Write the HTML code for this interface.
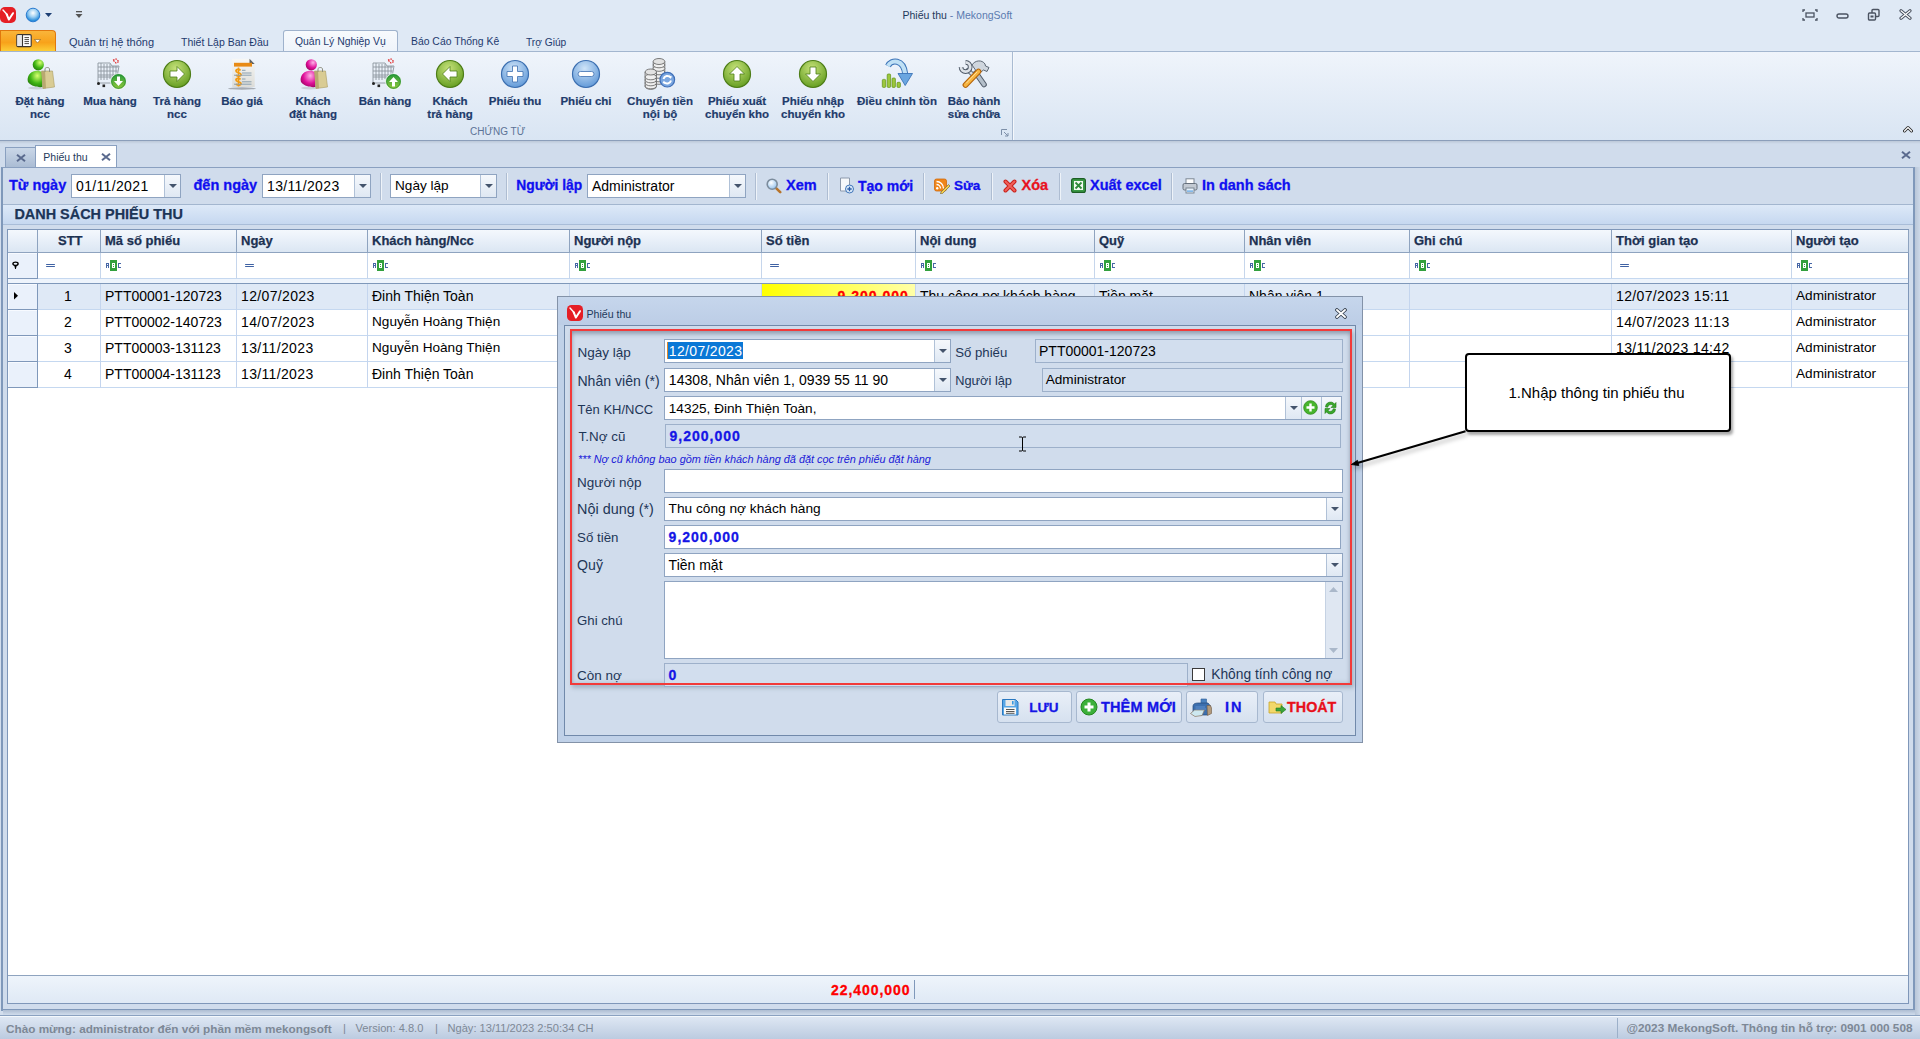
<!DOCTYPE html><html><head><meta charset="utf-8"><style>
*{box-sizing:border-box;margin:0;padding:0}
html,body{width:1920px;height:1039px;overflow:hidden;background:#d3deed;font-family:"Liberation Sans",sans-serif;position:relative}
.a{position:absolute}
.t{position:absolute;white-space:nowrap;line-height:1}
.rl{position:absolute;white-space:nowrap;text-align:center;font-weight:bold;font-size:11.5px;color:#1f3c6c;line-height:13px;width:120px;-webkit-text-stroke:0.2px currentColor}
.ic{position:absolute}
.inp{position:absolute;background:#fff;border:1px solid #8fa4c1}
.dis{position:absolute;background:#d2deee;border:1px solid #9db0ca}
.dd{position:absolute;top:0;bottom:0;right:0;width:16px;border-left:1px solid #b0c1d7;background:linear-gradient(#f5f8fc,#dfe8f3)}
.dd:after{content:"";position:absolute;left:4px;top:50%;margin-top:-2px;border-left:4px solid transparent;border-right:4px solid transparent;border-top:4px solid #44546c}
.tbl{position:absolute;font-weight:bold;color:#1010f0;font-size:14.5px;white-space:nowrap;line-height:1;-webkit-text-stroke:0.3px currentColor}
.vsep{position:absolute;width:2px;border-left:1px solid #aebdd2;border-right:1px solid #eef3f9}
.hc{position:absolute;top:0;height:23px;border-right:1px solid #8ea3bf;font-weight:bold;font-size:12.5px;color:#1c3152;white-space:nowrap;line-height:1;padding:7px 0 0 5px}
.fc{position:absolute;top:23px;height:26px;border-right:1px solid #c3d3ea}
.cell{position:absolute;height:26px;border-right:1px solid #c4d5ee;border-bottom:1px solid #c4d5ee;font-size:13px;color:#000;white-space:nowrap;overflow:hidden;line-height:1;padding:7px 0 0 5px}
.dl{position:absolute;font-size:13px;color:#1e3657;white-space:nowrap;line-height:1}
.dv{position:absolute;font-size:13px;color:#000;white-space:nowrap;line-height:1}
.sb{position:absolute;font-size:11.5px;color:#7d8896;white-space:nowrap;line-height:1}
</style></head><body>
<div class="a" style="left:0;top:0;width:1920px;height:52px;background:#dfe9f5"></div>
<svg class="a" style="left:0;top:7px" width="17" height="17" viewBox="0 0 17 17"><rect x="0" y="0" width="16" height="16" rx="5" fill="#e51e25"/><path d="M3 3L7.3 7.8" stroke="#fff" stroke-width="1.4" fill="none" stroke-linecap="round"/><path d="M6.6 7.2L8.9 12.5L13 6.2" stroke="#fff" stroke-width="2" fill="none" stroke-linecap="round" stroke-linejoin="round"/></svg>
<svg class="a" style="left:25px;top:7px" width="16" height="16" viewBox="0 0 16 16"><defs><radialGradient id="gl" cx="0.5" cy="0.35" r="0.6"><stop offset="0" stop-color="#ffffff"/><stop offset="0.5" stop-color="#9fd0f2"/><stop offset="1" stop-color="#1c86d8"/></radialGradient></defs><circle cx="8" cy="8" r="6.8" fill="url(#gl)" stroke="#2a7bd0" stroke-width="1"/></svg>
<svg class="a" style="left:45px;top:13px" width="8" height="5"><path d="M0 0H7L3.5 4Z" fill="#1d3f74"/></svg>
<svg class="a" style="left:75px;top:11px" width="8" height="8"><rect x="1" y="0" width="6" height="1.3" fill="#555"/><path d="M0.5 3H7.5L4 7Z" fill="#555"/></svg>
<div class="t" style="left:902.50px;top:9.61px;font-size:10.50px;color:#1e395b">Phiếu thu <span style="color:#5b7bb0">- MekongSoft</span></div>
<svg class="a" style="left:1802px;top:9px" width="16" height="12" viewBox="0 0 16 12"><path d="M1 3V1H3 M13 1H15V3 M15 9V11H13 M3 11H1V9" stroke="#4b5361" stroke-width="1.3" fill="none"/><rect x="4" y="4" width="8" height="4" stroke="#4b5361" stroke-width="1.3" fill="none"/></svg>
<svg class="a" style="left:1836px;top:12px" width="14" height="8"><rect x="1" y="2" width="11" height="4" rx="2" stroke="#4b5361" stroke-width="1.4" fill="none"/></svg>
<svg class="a" style="left:1867px;top:8px" width="14" height="14" viewBox="0 0 14 14"><rect x="5" y="1.5" width="7" height="7" rx="1" stroke="#4b5361" stroke-width="1.4" fill="#dfe9f5"/><rect x="1.5" y="5" width="7" height="7" rx="1" stroke="#4b5361" stroke-width="1.4" fill="#dfe9f5"/><rect x="3.5" y="7.5" width="3" height="2" fill="#4b5361"/></svg>
<svg class="a" style="left:1899px;top:9px" width="13" height="11" viewBox="0 0 13 11"><path d="M2 1.8L11 9.2M11 1.8L2 9.2" stroke="#4b5361" stroke-width="3.2" stroke-linecap="round"/><path d="M2 1.8L11 9.2M11 1.8L2 9.2" stroke="#fff" stroke-width="1.2" stroke-linecap="round"/></svg>
<div class="a" style="left:0;top:30px;width:56px;height:22px;border-radius:0 4px 0 0;background:linear-gradient(#f9b53b,#f8a21a 55%,#fcd23a);border:1px solid #e0780d;border-bottom:none"></div>
<svg class="a" style="left:16px;top:34px" width="27" height="14" viewBox="0 0 27 14"><rect x="0.8" y="0.6" width="14.4" height="12" rx="1.2" fill="#fff" stroke="#3a3530" stroke-width="1.1"/><rect x="1.4" y="1.2" width="4.6" height="10.8" fill="#e6e6e6"/><line x1="6.5" y1="1" x2="6.5" y2="12.5" stroke="#3a3530" stroke-width="1.1"/><path d="M8.5 3.6H13M8.5 5.6H13M8.5 7.6H13M8.5 9.6H13" stroke="#3a3530" stroke-width="0.9"/><path d="M18.5 5.5H24.5L21.5 9Z" fill="#fff" stroke="#6a4a10" stroke-width="0.5"/></svg>
<div class="a" style="left:283px;top:30px;width:115px;height:23px;border:1px solid #9fb2cc;border-bottom:none;border-radius:3px 3px 0 0;background:linear-gradient(#f7fafd,#eef3fa)"></div>
<div class="t" style="left:69.00px;top:36.88px;font-size:11.00px;color:#1e3a6e">Quản trị hệ thống</div>
<div class="t" style="left:181.00px;top:37.31px;font-size:10.50px;color:#1e3a6e">Thiết Lập Ban Đầu</div>
<div class="t" style="left:295.00px;top:37.39px;font-size:10.40px;color:#1e3a6e">Quản Lý Nghiệp Vụ</div>
<div class="t" style="left:411.00px;top:37.39px;font-size:10.40px;color:#1e3a6e">Báo Cáo Thống Kê</div>
<div class="t" style="left:526.00px;top:37.56px;font-size:10.20px;color:#1e3a6e">Trợ Giúp</div>
<div class="a" style="left:0;top:51px;width:1920px;height:90px;background:linear-gradient(#eff4fb,#d9e5f3);border-top:1px solid #a3b6cf;border-bottom:1px solid #8b9eba"></div>
<div class="a" style="left:1012px;top:52px;width:1px;height:88px;background:#a9bbd2"></div>
<div class="a" style="left:1013px;top:52px;width:1px;height:88px;background:#f5f8fc"></div>
<div class="t" style="left:470px;top:127px;font-size:10px;color:#5b7296">CHỨNG TỪ</div>
<svg class="a" style="left:1001px;top:129px" width="8" height="8"><path d="M0.5 6V0.5H6" stroke="#7d8fa8" fill="none"/><path d="M3 3L7 7M7 4V7H4" stroke="#7d8fa8" fill="none"/></svg>
<svg class="a" style="left:1902.5px;top:125px" width="10" height="8" viewBox="0 0 10 8"><path d="M1.5 6L5 2.5L8.5 6" stroke="#2a2a2a" stroke-width="3" fill="none" stroke-linecap="round" stroke-linejoin="round"/><path d="M1.5 6L5 2.5L8.5 6" stroke="#fff" stroke-width="1.2" fill="none" stroke-linecap="round" stroke-linejoin="round"/></svg>
<div class="ic" style="left:24px;top:58px;width:32px;height:32px"><svg width="32" height="32" viewBox="0 0 32 32"><defs><radialGradient id="p1" cx="0.65" cy="0.3" r="0.85"><stop offset="0" stop-color="#d6ff70"/><stop offset="0.55" stop-color="#3fb514"/><stop offset="1" stop-color="#1f6a08"/></radialGradient></defs><ellipse cx="13" cy="30" rx="9" ry="1.5" fill="rgba(0,0,0,0.12)"/><circle cx="14.3" cy="6.8" r="5.6" fill="url(#p1)"/><path d="M4 24C2.5 19 6 13.5 11 13C14 12.5 17 13 18.5 15V29C15 29.5 8 29 4 24Z" fill="url(#p1)"/><path d="M17.5 13H28.5L30.5 29L19 30.5Z" fill="#d9cc94" stroke="#aa9a60" stroke-width="0.6"/><path d="M17.5 13H21L22 30.3L19 30.5Z" fill="#b8a870"/><path d="M21 14V11C21 9 25.5 9 25.5 11V14" stroke="#8f8f80" stroke-width="1" fill="none"/></svg></div>
<div class="rl" style="left:-20px;top:95px">Đặt hàng<br>ncc</div>
<div class="ic" style="left:94px;top:58px;width:32px;height:32px"><svg width="32" height="32" viewBox="0 0 32 32"><g stroke="#8c959e" stroke-width="0.9" fill="none"><path d="M4 5V25M7 5V22M10 6V22M13 6V22M16 6V21M19 8V20M22 8V19"/><path d="M4 5H16L18 8H25L23 19H4M4 9H24M4 13H23.5M4 17H23"/><path d="M5 25H18"/></g><path d="M19 2L22 1L25 3.5L22 5Z" stroke="#e03030" stroke-width="1.2" fill="none" stroke-dasharray="1.5 1"/><circle cx="4.5" cy="25.5" r="1.5" fill="#222"/><rect x="8.5" y="26.5" width="2.6" height="2.6" fill="#222"/><defs><linearGradient id="cg2" x1="0" y1="0" x2="0" y2="1"><stop offset="0" stop-color="#239a3a"/><stop offset="1" stop-color="#95c83a"/></linearGradient></defs><circle cx="24.5" cy="23.5" r="7.8" fill="url(#cg2)" stroke="#fff" stroke-width="0.8"/><circle cx="24.5" cy="23.5" r="6.9" fill="none" stroke="#1f8a30" stroke-width="0.7"/><path d="M23 18.5V23H20L24.5 28L29 23H26V18.5Z" fill="#fff"/></svg></div>
<div class="rl" style="left:50px;top:95px">Mua hàng</div>
<div class="ic" style="left:161px;top:58px;width:32px;height:32px"><svg width="32" height="32" viewBox="0 0 32 32"><defs><radialGradient id="g3" cx="0.45" cy="0.3" r="0.75"><stop offset="0" stop-color="#c6e27a"/><stop offset="1" stop-color="#5f9a1c"/></radialGradient></defs><circle cx="16" cy="16" r="13.5" fill="url(#g3)" stroke="#4d7d17" stroke-width="1.2"/><path d="M9 13H16V8.5L23.5 16L16 23.5V19H9Z" fill="#fff" stroke="#4d7d17" stroke-width="0.8"/></svg></div>
<div class="rl" style="left:117px;top:95px">Trả hàng<br>ncc</div>
<div class="ic" style="left:226px;top:58px;width:32px;height:32px"><svg width="32" height="32" viewBox="0 0 32 32"><defs><linearGradient id="d%4" x1="0" y1="0" x2="0" y2="1"><stop offset="0" stop-color="#f7f7f5"/><stop offset="1" stop-color="#dcdcd8"/></linearGradient></defs><ellipse cx="16" cy="30.5" rx="14" ry="1.2" fill="rgba(0,0,0,0.28)"/><path d="M6.2 0.8H23.5L28.7 6V29H6.2Z" fill="url(#d%4)"/><path d="M23.5 0.8L28.7 6H23.5Z" fill="#5e6266"/><rect x="8" y="4.8" width="18" height="3.8" fill="#e88a14"/><path d="M12.5 9.5V20M12.5 19V28.5" stroke="#f39a10" stroke-width="1.6"/><path d="M14.5 12.5C13.5 11 10 11 10 13C10 15 15 14.5 15 16.5C15 18.5 11 18.5 10 17M14.5 21.5C13.5 20 10 20 10 22C10 24 15 23.5 15 25.5C15 27.5 11 27.5 10 26" stroke="#f39a10" stroke-width="1.8" fill="none"/><path d="M16 12.3H19.5M16 15H25.5M16 21H19.5M16 23.8H25.5M8 17.2H25.5M8 26.2H25.5" stroke="#8aa0b0" stroke-width="1"/></svg></div>
<div class="rl" style="left:182px;top:95px">Báo giá</div>
<div class="ic" style="left:297px;top:58px;width:32px;height:32px"><svg width="32" height="32" viewBox="0 0 32 32"><defs><radialGradient id="p5" cx="0.65" cy="0.3" r="0.85"><stop offset="0" stop-color="#ffb0e8"/><stop offset="0.55" stop-color="#e0109a"/><stop offset="1" stop-color="#8a0050"/></radialGradient></defs><ellipse cx="13" cy="30" rx="9" ry="1.5" fill="rgba(0,0,0,0.12)"/><circle cx="14.3" cy="6.8" r="5.6" fill="url(#p5)"/><path d="M4 24C2.5 19 6 13.5 11 13C14 12.5 17 13 18.5 15V29C15 29.5 8 29 4 24Z" fill="url(#p5)"/><path d="M17.5 13H28.5L30.5 29L19 30.5Z" fill="#d9cc94" stroke="#aa9a60" stroke-width="0.6"/><path d="M17.5 13H21L22 30.3L19 30.5Z" fill="#b8a870"/><path d="M21 14V11C21 9 25.5 9 25.5 11V14" stroke="#8f8f80" stroke-width="1" fill="none"/></svg></div>
<div class="rl" style="left:253px;top:95px">Khách<br>đặt hàng</div>
<div class="ic" style="left:369px;top:58px;width:32px;height:32px"><svg width="32" height="32" viewBox="0 0 32 32"><g stroke="#8c959e" stroke-width="0.9" fill="none"><path d="M4 5V25M7 5V22M10 6V22M13 6V22M16 6V21M19 8V20M22 8V19"/><path d="M4 5H16L18 8H25L23 19H4M4 9H24M4 13H23.5M4 17H23"/><path d="M5 25H18"/></g><path d="M19 2L22 1L25 3.5L22 5Z" stroke="#e03030" stroke-width="1.2" fill="none" stroke-dasharray="1.5 1"/><circle cx="4.5" cy="25.5" r="1.5" fill="#222"/><rect x="8.5" y="26.5" width="2.6" height="2.6" fill="#222"/><defs><linearGradient id="cg6" x1="0" y1="0" x2="0" y2="1"><stop offset="0" stop-color="#239a3a"/><stop offset="1" stop-color="#95c83a"/></linearGradient></defs><circle cx="24.5" cy="23.5" r="7.8" fill="url(#cg6)" stroke="#fff" stroke-width="0.8"/><circle cx="24.5" cy="23.5" r="6.9" fill="none" stroke="#1f8a30" stroke-width="0.7"/><path d="M23 28.5V24H20L24.5 19L29 24H26V28.5Z" fill="#fff"/></svg></div>
<div class="rl" style="left:325px;top:95px">Bán hàng</div>
<div class="ic" style="left:434px;top:58px;width:32px;height:32px"><svg width="32" height="32" viewBox="0 0 32 32"><defs><radialGradient id="g7" cx="0.45" cy="0.3" r="0.75"><stop offset="0" stop-color="#c6e27a"/><stop offset="1" stop-color="#5f9a1c"/></radialGradient></defs><circle cx="16" cy="16" r="13.5" fill="url(#g7)" stroke="#4d7d17" stroke-width="1.2"/><path d="M23 13H16V8.5L8.5 16L16 23.5V19H23Z" fill="#fff" stroke="#4d7d17" stroke-width="0.8"/></svg></div>
<div class="rl" style="left:390px;top:95px">Khách<br>trả hàng</div>
<div class="ic" style="left:499px;top:58px;width:32px;height:32px"><svg width="32" height="32" viewBox="0 0 32 32"><defs><radialGradient id="g8" cx="0.45" cy="0.3" r="0.75"><stop offset="0" stop-color="#cfe4f8"/><stop offset="1" stop-color="#5b95d6"/></radialGradient></defs><circle cx="16" cy="16" r="13.5" fill="url(#g8)" stroke="#3c6fb0" stroke-width="1.2"/><path d="M13.5 8H18.5V13.5H24V18.5H18.5V24H13.5V18.5H8V13.5H13.5Z" fill="#fff" stroke="#3c6fb0" stroke-width="0.8"/></svg></div>
<div class="rl" style="left:455px;top:95px">Phiếu thu</div>
<div class="ic" style="left:570px;top:58px;width:32px;height:32px"><svg width="32" height="32" viewBox="0 0 32 32"><defs><radialGradient id="g9" cx="0.45" cy="0.3" r="0.75"><stop offset="0" stop-color="#cfe4f8"/><stop offset="1" stop-color="#5b95d6"/></radialGradient></defs><circle cx="16" cy="16" r="13.5" fill="url(#g9)" stroke="#3c6fb0" stroke-width="1.2"/><rect x="8" y="13.5" width="16" height="5" rx="2.5" fill="#fff" stroke="#3c6fb0" stroke-width="0.8"/></svg></div>
<div class="rl" style="left:526px;top:95px">Phiếu chi</div>
<div class="ic" style="left:644px;top:58px;width:32px;height:32px"><svg width="32" height="32" viewBox="0 0 32 32"><g fill="#efefef" stroke="#6d6d6d" stroke-width="0.9"><path d="M9.2 3.5V23.5A5.8 2.8 0 0 0 20.8 23.5V3.5Z"/><ellipse cx="15" cy="21" rx="5.8" ry="2.8"/><ellipse cx="15" cy="17.5" rx="5.8" ry="2.8"/><ellipse cx="15" cy="14" rx="5.8" ry="2.8"/><ellipse cx="15" cy="10.5" rx="5.8" ry="2.8"/><ellipse cx="15" cy="7" rx="5.8" ry="2.8"/><ellipse cx="15" cy="3.5" rx="5.8" ry="3" fill="#e2e2e2"/><path d="M1.1 14V28.5A5.7 2.8 0 0 0 12.5 28.5V14Z"/><ellipse cx="6.8" cy="28" rx="5.7" ry="2.8"/><ellipse cx="6.8" cy="25" rx="5.7" ry="2.8"/><ellipse cx="6.8" cy="22" rx="5.7" ry="2.8"/><ellipse cx="6.8" cy="19" rx="5.7" ry="2.8"/><ellipse cx="6.8" cy="14" rx="5.7" ry="3" fill="#e2e2e2"/></g><circle cx="23.3" cy="21.7" r="7.3" fill="#7aa6e0" stroke="#3f6fb8" stroke-width="1.2"/><path d="M19.5 21A4 4 0 0 1 26.5 19.5M27 22.5A4 4 0 0 1 20 24" stroke="#fff" stroke-width="2" fill="none"/><path d="M25 17.5L28 18.5L26.5 21Z M21.5 26L18.5 25L20 22.5Z" fill="#fff"/></svg></div>
<div class="rl" style="left:600px;top:95px">Chuyển tiền<br>nội bộ</div>
<div class="ic" style="left:721px;top:58px;width:32px;height:32px"><svg width="32" height="32" viewBox="0 0 32 32"><defs><radialGradient id="g11" cx="0.45" cy="0.3" r="0.75"><stop offset="0" stop-color="#c6e27a"/><stop offset="1" stop-color="#5f9a1c"/></radialGradient></defs><circle cx="16" cy="16" r="13.5" fill="url(#g11)" stroke="#4d7d17" stroke-width="1.2"/><path d="M13 23V16H8.5L16 8.5L23.5 16H19V23Z" fill="#fff" stroke="#4d7d17" stroke-width="0.8"/></svg></div>
<div class="rl" style="left:677px;top:95px">Phiếu xuất<br>chuyển kho</div>
<div class="ic" style="left:797px;top:58px;width:32px;height:32px"><svg width="32" height="32" viewBox="0 0 32 32"><defs><radialGradient id="g12" cx="0.45" cy="0.3" r="0.75"><stop offset="0" stop-color="#c6e27a"/><stop offset="1" stop-color="#5f9a1c"/></radialGradient></defs><circle cx="16" cy="16" r="13.5" fill="url(#g12)" stroke="#4d7d17" stroke-width="1.2"/><path d="M13 9V16H8.5L16 23.5L23.5 16H19V9Z" fill="#fff" stroke="#4d7d17" stroke-width="0.8"/></svg></div>
<div class="rl" style="left:753px;top:95px">Phiếu nhập<br>chuyển kho</div>
<div class="ic" style="left:881px;top:58px;width:32px;height:32px"><svg width="32" height="32" viewBox="0 0 32 32"><g fill="#9cc83c" stroke="#5f8f16" stroke-width="0.7"><rect x="1.3" y="21.4" width="3.4" height="8" rx="1"/><rect x="6.2" y="16" width="3.4" height="13.4" rx="1"/><rect x="11" y="20" width="3.4" height="9.4" rx="1"/><rect x="16" y="24.3" width="3.4" height="5.1" rx="1"/></g><path d="M7 8C10 1.5 22.5 0.5 24.2 16" stroke="#3c74b8" stroke-width="6" fill="none"/><path d="M7 8C10 1.5 22.5 0.5 24.2 16" stroke="#bfe0f5" stroke-width="4.2" fill="none"/><path d="M17 15.5H31.5L24.2 27.5Z" fill="#6aa6e0" stroke="#3c74b8" stroke-width="0.9" stroke-linejoin="round"/></svg></div>
<div class="rl" style="left:837px;top:95px">Điều chỉnh tồn</div>
<div class="ic" style="left:958px;top:58px;width:32px;height:32px"><svg width="32" height="32" viewBox="0 0 32 32"><path d="M18 15L26 26.5" stroke="#4f5a68" stroke-width="5.6" stroke-linecap="round"/><path d="M18 15L26 26.5" stroke="#b4bfca" stroke-width="3.6" stroke-linecap="round"/><path d="M10 12L16 18" stroke="#4f5a68" stroke-width="4.4" stroke-linecap="round"/><path d="M10 12L16 18" stroke="#d5dbe2" stroke-width="2.6" stroke-linecap="round"/><path d="M3 9A4.6 4.6 0 1 0 7.6 4.4" stroke="#4f5a68" stroke-width="4.6" fill="none"/><path d="M3 9A4.6 4.6 0 1 0 7.6 4.4" stroke="#dde2e8" stroke-width="2.8" fill="none"/><path d="M14 7C17 2 24 1.5 27 6L27.5 8L31 9.5L29 13.5L25.5 12L21 15.5L17.5 12Z" fill="#cfd6de" stroke="#4f5a68" stroke-width="0.9" stroke-linejoin="round"/><path d="M20.5 13.5L7.5 27" stroke="#b5650c" stroke-width="5.8" stroke-linecap="round"/><path d="M20.5 13.5L7.5 27" stroke="#f7b540" stroke-width="3.6" stroke-linecap="round"/><path d="M19 14L8.5 25" stroke="#ffe0a0" stroke-width="1" stroke-linecap="round"/></svg></div>
<div class="rl" style="left:914px;top:95px">Bảo hành<br>sửa chữa</div>
<div class="a" style="left:0;top:141px;width:1920px;height:27px;background:linear-gradient(#bcc8d8,#d0dcec 3px,#d0dcec)"></div>
<div class="a" style="left:5px;top:147px;width:31px;height:21px;background:linear-gradient(#cad7e8,#a9bbd3);border:1px solid #8aa0c0;border-bottom:none"></div>
<svg class="a" style="left:15.5px;top:153.5px" width="10" height="8"><path d="M1 0.8L9 7.2M9 0.8L1 7.2" stroke="#5a6a8e" stroke-width="2"/></svg>
<div class="a" style="left:35px;top:145px;width:82px;height:23px;background:#fff;border:1px solid #8aa0c0;border-bottom:none"></div>
<div class="t" style="left:43.30px;top:151.91px;font-size:10.50px;color:#1e395b">Phiếu thu</div>
<svg class="a" style="left:100.5px;top:152.8px" width="10" height="8"><path d="M1 0.8L9 7.2M9 0.8L1 7.2" stroke="#5a6a8e" stroke-width="2"/></svg>
<svg class="a" style="left:1900.5px;top:151px" width="10" height="8"><path d="M1 0.8L9 7.2M9 0.8L1 7.2" stroke="#5a6a8e" stroke-width="2"/></svg>
<div class="a" style="left:1915px;top:167px;width:5px;height:848px;background:linear-gradient(90deg,#b9c6d8,#ccd8e8)"></div>
<div class="a" style="left:1px;top:167px;width:1914px;height:844px;background:#d0dcec;border:2px solid #7f98ba;border-top:1px solid #8aa0c0"></div>
<div class="a" style="left:3px;top:204px;width:1910px;height:1px;background:#a3b6cf"></div>
<div class="tbl" style="left:9.00px;top:178.32px;font-size:14.50px;">Từ ngày</div>
<div class="inp" style="left:71px;top:174px;width:110px;height:24px"><div class="dv" style="left:4px;top:4.3px;font-size:14px;letter-spacing:0.35px">01/11/2021</div><div class="dd"></div></div>
<div class="tbl" style="left:193.50px;top:178.32px;font-size:14.50px;">đến ngày</div>
<div class="inp" style="left:262px;top:174px;width:109px;height:24px"><div class="dv" style="left:4px;top:4.3px;font-size:14px;letter-spacing:0.35px">13/11/2023</div><div class="dd"></div></div>
<div class="vsep" style="left:380px;top:173px;height:27px"></div>
<div class="inp" style="left:390px;top:174px;width:107px;height:24px"><div class="dv" style="left:4px;top:4.3px;font-size:13.6px">Ngày lập</div><div class="dd"></div></div>
<div class="vsep" style="left:506px;top:173px;height:27px"></div>
<div class="tbl" style="left:516.30px;top:178.91px;font-size:13.80px;">Người lập</div>
<div class="inp" style="left:587px;top:174px;width:159px;height:24px"><div class="dv" style="left:4px;top:4.3px;font-size:14px">Administrator</div><div class="dd"></div></div>
<div class="vsep" style="left:755px;top:173px;height:27px"></div>
<div class="vsep" style="left:827px;top:173px;height:27px"></div>
<div class="vsep" style="left:923px;top:173px;height:27px"></div>
<div class="vsep" style="left:991px;top:173px;height:27px"></div>
<div class="vsep" style="left:1059px;top:173px;height:27px"></div>
<div class="vsep" style="left:1171px;top:173px;height:27px"></div>
<svg class="a" style="left:766px;top:178px" width="16" height="16" viewBox="0 0 16 16"><defs><radialGradient id="mg" cx="0.4" cy="0.35" r="0.7"><stop offset="0" stop-color="#ffffff"/><stop offset="1" stop-color="#8fc0ee"/></radialGradient></defs><path d="M9.8 9.8L14.2 14.2" stroke="#b8742a" stroke-width="2.6" stroke-linecap="round"/><circle cx="6.2" cy="6.2" r="5" fill="url(#mg)" stroke="#7c8c9c" stroke-width="1.6"/></svg>
<div class="tbl" style="left:786.00px;top:178.32px;font-size:14.50px;">Xem</div>
<svg class="a" style="left:839px;top:177px" width="16" height="17" viewBox="0 0 16 17"><path d="M1.5 1H10.5V14H1.5Z" fill="#f6f8fb" stroke="#8c99ac" stroke-width="1"/><circle cx="10.5" cy="12" r="4" fill="#dcebfa" stroke="#3f74b8" stroke-width="1"/><path d="M10.5 9.8V14.2M8.3 12H12.7" stroke="#2d5fa8" stroke-width="1.3"/></svg>
<div class="tbl" style="left:858.00px;top:178.74px;font-size:14.00px;">Tạo mới</div>
<svg class="a" style="left:934px;top:178px" width="17" height="16" viewBox="0 0 17 16"><rect x="0.5" y="1" width="12" height="12" rx="2" fill="#f0861a" stroke="#d06a0a" stroke-width="0.8"/><circle cx="3.2" cy="10.3" r="1.2" fill="#fff"/><path d="M2.5 6.5A4 4 0 0 1 6.5 10.5M2.5 3.5A7 7 0 0 1 9.5 10.5" stroke="#fff" stroke-width="1.3" fill="none"/><path d="M7 14L14.5 6.5L16 8L8.5 15.5L6.5 16Z" fill="#f7d04a" stroke="#7a6a40" stroke-width="0.7"/></svg>
<div class="tbl" style="left:954.00px;top:179.17px;font-size:13.50px;">Sửa</div>
<svg class="a" style="left:1003px;top:179px" width="14" height="14" viewBox="0 0 14 14"><path d="M2.5 2.5L11.5 11.5M11.5 2.5L2.5 11.5" stroke="#c8201a" stroke-width="4" stroke-linecap="round"/><path d="M2.5 2.5L11.5 11.5M11.5 2.5L2.5 11.5" stroke="#f0605a" stroke-width="2" stroke-linecap="round"/></svg>
<div class="tbl" style="left:1021.50px;top:178.32px;font-size:14.50px;color:#e8121e">Xóa</div>
<svg class="a" style="left:1071px;top:178px" width="15" height="15" viewBox="0 0 15 15"><rect x="0.6" y="0.6" width="13.8" height="13.8" rx="2" fill="#3a9a45" stroke="#1c5e24" stroke-width="1.1"/><rect x="3" y="3" width="9" height="9" fill="#f4fbf2"/><path d="M4.5 4.5L10.5 10.5M10.5 4.5L4.5 10.5" stroke="#2f8a3a" stroke-width="1.8"/></svg>
<div class="tbl" style="left:1090.00px;top:178.32px;font-size:14.50px;">Xuất excel</div>
<svg class="a" style="left:1182px;top:178px" width="16" height="16" viewBox="0 0 16 16"><rect x="4" y="0.8" width="8" height="5.5" fill="#fff" stroke="#7c8794" stroke-width="1"/><rect x="1" y="5.5" width="14" height="6.5" rx="1.5" fill="#c3cad3" stroke="#66707c" stroke-width="1"/><rect x="4" y="10" width="8" height="5" fill="#e6f1fb" stroke="#7c8794" stroke-width="1"/><rect x="5" y="12.5" width="6" height="1.2" fill="#5aa0e0"/></svg>
<div class="tbl" style="left:1202.00px;top:178.32px;font-size:14.50px;">In danh sách</div>
<div class="a" style="left:3px;top:205px;width:1910px;height:20px;background:linear-gradient(#dde9f8,#c6d8f0);border-bottom:1px solid #a9bdd8"></div>
<div class="t" style="left:14.40px;top:207.36px;font-size:14.45px;font-weight:bold;color:#1c3557;-webkit-text-stroke:0.25px currentColor">DANH SÁCH PHIẾU THU</div>
<div class="a" style="left:7px;top:229px;width:1902px;height:775px;background:#fff;border:1px solid #7f97b9"></div>
<div class="a" style="left:8px;top:230px;width:1900px;height:23px;background:linear-gradient(#f4f8fd,#dbe6f3);border-bottom:1px solid #8ea3bf"></div>
<div class="a" style="left:37px;top:230px;width:1px;height:23px;background:#8ea3bf"></div>
<div class="a" style="left:100px;top:230px;width:1px;height:23px;background:#8ea3bf"></div>
<div class="t" style="left:58.00px;top:233.99px;font-size:13.00px;font-weight:bold;color:#1c3152;-webkit-text-stroke:0.25px currentColor">STT</div>
<div class="a" style="left:236px;top:230px;width:1px;height:23px;background:#8ea3bf"></div>
<div class="t" style="left:105.00px;top:233.99px;font-size:13.00px;font-weight:bold;color:#1c3152;-webkit-text-stroke:0.25px currentColor">Mã số phiếu</div>
<div class="a" style="left:367px;top:230px;width:1px;height:23px;background:#8ea3bf"></div>
<div class="t" style="left:241.00px;top:233.99px;font-size:13.00px;font-weight:bold;color:#1c3152;-webkit-text-stroke:0.25px currentColor">Ngày</div>
<div class="a" style="left:569px;top:230px;width:1px;height:23px;background:#8ea3bf"></div>
<div class="t" style="left:372.00px;top:233.99px;font-size:13.00px;font-weight:bold;color:#1c3152;-webkit-text-stroke:0.25px currentColor">Khách hàng/Ncc</div>
<div class="a" style="left:761px;top:230px;width:1px;height:23px;background:#8ea3bf"></div>
<div class="t" style="left:574.00px;top:233.99px;font-size:13.00px;font-weight:bold;color:#1c3152;-webkit-text-stroke:0.25px currentColor">Người nộp</div>
<div class="a" style="left:915px;top:230px;width:1px;height:23px;background:#8ea3bf"></div>
<div class="t" style="left:766.00px;top:233.99px;font-size:13.00px;font-weight:bold;color:#1c3152;-webkit-text-stroke:0.25px currentColor">Số tiền</div>
<div class="a" style="left:1094px;top:230px;width:1px;height:23px;background:#8ea3bf"></div>
<div class="t" style="left:920.00px;top:233.99px;font-size:13.00px;font-weight:bold;color:#1c3152;-webkit-text-stroke:0.25px currentColor">Nội dung</div>
<div class="a" style="left:1244px;top:230px;width:1px;height:23px;background:#8ea3bf"></div>
<div class="t" style="left:1099.00px;top:233.99px;font-size:13.00px;font-weight:bold;color:#1c3152;-webkit-text-stroke:0.25px currentColor">Quỹ</div>
<div class="a" style="left:1409px;top:230px;width:1px;height:23px;background:#8ea3bf"></div>
<div class="t" style="left:1249.00px;top:233.99px;font-size:13.00px;font-weight:bold;color:#1c3152;-webkit-text-stroke:0.25px currentColor">Nhân viên</div>
<div class="a" style="left:1611px;top:230px;width:1px;height:23px;background:#8ea3bf"></div>
<div class="t" style="left:1414.00px;top:233.99px;font-size:13.00px;font-weight:bold;color:#1c3152;-webkit-text-stroke:0.25px currentColor">Ghi chú</div>
<div class="a" style="left:1791px;top:230px;width:1px;height:23px;background:#8ea3bf"></div>
<div class="t" style="left:1616.00px;top:233.99px;font-size:13.00px;font-weight:bold;color:#1c3152;-webkit-text-stroke:0.25px currentColor">Thời gian tạo</div>
<div class="a" style="left:1908px;top:230px;width:1px;height:23px;background:#8ea3bf"></div>
<div class="t" style="left:1796.00px;top:233.99px;font-size:13.00px;font-weight:bold;color:#1c3152;-webkit-text-stroke:0.25px currentColor">Người tạo</div>
<div class="a" style="left:8px;top:253px;width:1900px;height:26px;background:#fff;border-bottom:1px solid #c5d8f0"></div>
<div class="a" style="left:8px;top:253px;width:30px;height:26px;background:#eaf1fb;border-right:1px solid #7f98ba;border-bottom:1px solid #7f98ba;box-shadow:inset 1px 1px 0 #f7faff"></div>
<svg class="a" style="left:12px;top:261px" width="8" height="9" viewBox="0 0 8 9"><ellipse cx="3.5" cy="2.8" rx="2.6" ry="1.7" fill="none" stroke="#000" stroke-width="1.4"/><path d="M2.2 4.2H4.8L3.9 8H3.1Z" fill="#000"/></svg>
<div class="a" style="left:100px;top:253px;width:1px;height:26px;background:#c6d6ec"></div>
<svg class="a" style="left:46px;top:264px" width="10" height="4"><rect x="0" y="0" width="9" height="1.1" rx="0.5" fill="#3f62a4"/><rect x="0" y="2" width="9" height="1.1" rx="0.5" fill="#3f62a4"/></svg>
<div class="a" style="left:236px;top:253px;width:1px;height:26px;background:#c6d6ec"></div>
<svg class="a" style="left:105px;top:260px" width="17" height="11" viewBox="0 0 17 11" shape-rendering="crispEdges"><g fill="#4767a6"><rect x="1" y="3" width="3" height="1"/><rect x="1" y="4" width="1" height="4"/><rect x="3" y="4" width="1" height="4"/><rect x="2" y="5" width="1" height="1"/><rect x="13" y="3" width="3" height="1"/><rect x="13" y="4" width="1" height="3"/><rect x="13" y="7" width="3" height="1"/></g><rect x="5" y="0" width="7" height="11" fill="#32a03e"/><rect x="7" y="3" width="3" height="5" fill="#fff"/><rect x="8" y="4" width="1" height="1" fill="#32a03e"/><rect x="8" y="6" width="1" height="1" fill="#32a03e"/></svg>
<div class="a" style="left:367px;top:253px;width:1px;height:26px;background:#c6d6ec"></div>
<svg class="a" style="left:245px;top:264px" width="10" height="4"><rect x="0" y="0" width="9" height="1.1" rx="0.5" fill="#3f62a4"/><rect x="0" y="2" width="9" height="1.1" rx="0.5" fill="#3f62a4"/></svg>
<div class="a" style="left:569px;top:253px;width:1px;height:26px;background:#c6d6ec"></div>
<svg class="a" style="left:372px;top:260px" width="17" height="11" viewBox="0 0 17 11" shape-rendering="crispEdges"><g fill="#4767a6"><rect x="1" y="3" width="3" height="1"/><rect x="1" y="4" width="1" height="4"/><rect x="3" y="4" width="1" height="4"/><rect x="2" y="5" width="1" height="1"/><rect x="13" y="3" width="3" height="1"/><rect x="13" y="4" width="1" height="3"/><rect x="13" y="7" width="3" height="1"/></g><rect x="5" y="0" width="7" height="11" fill="#32a03e"/><rect x="7" y="3" width="3" height="5" fill="#fff"/><rect x="8" y="4" width="1" height="1" fill="#32a03e"/><rect x="8" y="6" width="1" height="1" fill="#32a03e"/></svg>
<div class="a" style="left:761px;top:253px;width:1px;height:26px;background:#c6d6ec"></div>
<svg class="a" style="left:574px;top:260px" width="17" height="11" viewBox="0 0 17 11" shape-rendering="crispEdges"><g fill="#4767a6"><rect x="1" y="3" width="3" height="1"/><rect x="1" y="4" width="1" height="4"/><rect x="3" y="4" width="1" height="4"/><rect x="2" y="5" width="1" height="1"/><rect x="13" y="3" width="3" height="1"/><rect x="13" y="4" width="1" height="3"/><rect x="13" y="7" width="3" height="1"/></g><rect x="5" y="0" width="7" height="11" fill="#32a03e"/><rect x="7" y="3" width="3" height="5" fill="#fff"/><rect x="8" y="4" width="1" height="1" fill="#32a03e"/><rect x="8" y="6" width="1" height="1" fill="#32a03e"/></svg>
<div class="a" style="left:915px;top:253px;width:1px;height:26px;background:#c6d6ec"></div>
<svg class="a" style="left:770px;top:264px" width="10" height="4"><rect x="0" y="0" width="9" height="1.1" rx="0.5" fill="#3f62a4"/><rect x="0" y="2" width="9" height="1.1" rx="0.5" fill="#3f62a4"/></svg>
<div class="a" style="left:1094px;top:253px;width:1px;height:26px;background:#c6d6ec"></div>
<svg class="a" style="left:920px;top:260px" width="17" height="11" viewBox="0 0 17 11" shape-rendering="crispEdges"><g fill="#4767a6"><rect x="1" y="3" width="3" height="1"/><rect x="1" y="4" width="1" height="4"/><rect x="3" y="4" width="1" height="4"/><rect x="2" y="5" width="1" height="1"/><rect x="13" y="3" width="3" height="1"/><rect x="13" y="4" width="1" height="3"/><rect x="13" y="7" width="3" height="1"/></g><rect x="5" y="0" width="7" height="11" fill="#32a03e"/><rect x="7" y="3" width="3" height="5" fill="#fff"/><rect x="8" y="4" width="1" height="1" fill="#32a03e"/><rect x="8" y="6" width="1" height="1" fill="#32a03e"/></svg>
<div class="a" style="left:1244px;top:253px;width:1px;height:26px;background:#c6d6ec"></div>
<svg class="a" style="left:1099px;top:260px" width="17" height="11" viewBox="0 0 17 11" shape-rendering="crispEdges"><g fill="#4767a6"><rect x="1" y="3" width="3" height="1"/><rect x="1" y="4" width="1" height="4"/><rect x="3" y="4" width="1" height="4"/><rect x="2" y="5" width="1" height="1"/><rect x="13" y="3" width="3" height="1"/><rect x="13" y="4" width="1" height="3"/><rect x="13" y="7" width="3" height="1"/></g><rect x="5" y="0" width="7" height="11" fill="#32a03e"/><rect x="7" y="3" width="3" height="5" fill="#fff"/><rect x="8" y="4" width="1" height="1" fill="#32a03e"/><rect x="8" y="6" width="1" height="1" fill="#32a03e"/></svg>
<div class="a" style="left:1409px;top:253px;width:1px;height:26px;background:#c6d6ec"></div>
<svg class="a" style="left:1249px;top:260px" width="17" height="11" viewBox="0 0 17 11" shape-rendering="crispEdges"><g fill="#4767a6"><rect x="1" y="3" width="3" height="1"/><rect x="1" y="4" width="1" height="4"/><rect x="3" y="4" width="1" height="4"/><rect x="2" y="5" width="1" height="1"/><rect x="13" y="3" width="3" height="1"/><rect x="13" y="4" width="1" height="3"/><rect x="13" y="7" width="3" height="1"/></g><rect x="5" y="0" width="7" height="11" fill="#32a03e"/><rect x="7" y="3" width="3" height="5" fill="#fff"/><rect x="8" y="4" width="1" height="1" fill="#32a03e"/><rect x="8" y="6" width="1" height="1" fill="#32a03e"/></svg>
<div class="a" style="left:1611px;top:253px;width:1px;height:26px;background:#c6d6ec"></div>
<svg class="a" style="left:1414px;top:260px" width="17" height="11" viewBox="0 0 17 11" shape-rendering="crispEdges"><g fill="#4767a6"><rect x="1" y="3" width="3" height="1"/><rect x="1" y="4" width="1" height="4"/><rect x="3" y="4" width="1" height="4"/><rect x="2" y="5" width="1" height="1"/><rect x="13" y="3" width="3" height="1"/><rect x="13" y="4" width="1" height="3"/><rect x="13" y="7" width="3" height="1"/></g><rect x="5" y="0" width="7" height="11" fill="#32a03e"/><rect x="7" y="3" width="3" height="5" fill="#fff"/><rect x="8" y="4" width="1" height="1" fill="#32a03e"/><rect x="8" y="6" width="1" height="1" fill="#32a03e"/></svg>
<div class="a" style="left:1791px;top:253px;width:1px;height:26px;background:#c6d6ec"></div>
<svg class="a" style="left:1620px;top:264px" width="10" height="4"><rect x="0" y="0" width="9" height="1.1" rx="0.5" fill="#3f62a4"/><rect x="0" y="2" width="9" height="1.1" rx="0.5" fill="#3f62a4"/></svg>
<svg class="a" style="left:1796px;top:260px" width="17" height="11" viewBox="0 0 17 11" shape-rendering="crispEdges"><g fill="#4767a6"><rect x="1" y="3" width="3" height="1"/><rect x="1" y="4" width="1" height="4"/><rect x="3" y="4" width="1" height="4"/><rect x="2" y="5" width="1" height="1"/><rect x="13" y="3" width="3" height="1"/><rect x="13" y="4" width="1" height="3"/><rect x="13" y="7" width="3" height="1"/></g><rect x="5" y="0" width="7" height="11" fill="#32a03e"/><rect x="7" y="3" width="3" height="5" fill="#fff"/><rect x="8" y="4" width="1" height="1" fill="#32a03e"/><rect x="8" y="6" width="1" height="1" fill="#32a03e"/></svg>
<div class="a" style="left:8px;top:279px;width:1900px;height:5px;background:#eef4fc;border-bottom:1px solid #7f98ba"></div>
<div class="a" style="left:8px;top:284px;width:1900px;height:26px;background:#dfe9f6"></div>
<div class="a" style="left:8px;top:284px;width:30px;height:26px;background:#eaf1fb;border-right:1px solid #7f98ba;border-bottom:1px solid #7f98ba;box-shadow:inset 1px 1px 0 #f7faff"></div>
<svg class="a" style="left:14px;top:292px" width="5" height="8"><path d="M0 0L4 3.8L0 7.6Z" fill="#000"/></svg>
<div class="a" style="left:38px;top:309px;width:1870px;height:1px;background:#c5d8f0"></div>
<div class="a" style="left:100px;top:284px;width:1px;height:26px;background:#c4d5ee"></div>
<div class="t" style="left:64.00px;top:289.14px;font-size:14.00px;">1</div>
<div class="a" style="left:236px;top:284px;width:1px;height:26px;background:#c4d5ee"></div>
<div class="t" style="left:105.00px;top:289.14px;font-size:14.00px;">PTT00001-120723</div>
<div class="a" style="left:367px;top:284px;width:1px;height:26px;background:#c4d5ee"></div>
<div class="t" style="left:241.00px;top:289.14px;font-size:14.00px;letter-spacing:0.35px">12/07/2023</div>
<div class="a" style="left:569px;top:284px;width:1px;height:26px;background:#c4d5ee"></div>
<div class="t" style="left:372.00px;top:289.14px;font-size:14.00px;">Đinh Thiện Toàn</div>
<div class="a" style="left:761px;top:284px;width:1px;height:26px;background:#c4d5ee"></div>
<div class="a" style="left:915px;top:284px;width:1px;height:26px;background:#c4d5ee"></div>
<div class="a" style="left:762px;top:284px;width:153px;height:25px;background:linear-gradient(90deg,#ffff00,#ffffa8)"></div>
<div class="t" style="left:837.60px;top:289.14px;font-size:14.00px;font-weight:bold;color:#f00;letter-spacing:1px;-webkit-text-stroke:0.3px currentColor">9,200,000</div>
<div class="a" style="left:1094px;top:284px;width:1px;height:26px;background:#c4d5ee"></div>
<div class="t" style="left:920.00px;top:289.14px;font-size:14.00px;">Thu công nợ khách hàng</div>
<div class="a" style="left:1244px;top:284px;width:1px;height:26px;background:#c4d5ee"></div>
<div class="t" style="left:1099.00px;top:289.14px;font-size:14.00px;">Tiền mặt</div>
<div class="a" style="left:1409px;top:284px;width:1px;height:26px;background:#c4d5ee"></div>
<div class="t" style="left:1249.00px;top:289.14px;font-size:14.00px;">Nhân viên 1</div>
<div class="a" style="left:1611px;top:284px;width:1px;height:26px;background:#c4d5ee"></div>
<div class="a" style="left:1791px;top:284px;width:1px;height:26px;background:#c4d5ee"></div>
<div class="t" style="left:1616.00px;top:289.14px;font-size:14.00px;letter-spacing:0.35px">12/07/2023 15:11</div>
<div class="t" style="left:1796.00px;top:289.48px;font-size:13.60px;">Administrator</div>
<div class="a" style="left:8px;top:310px;width:1900px;height:26px;background:#fff"></div>
<div class="a" style="left:8px;top:310px;width:30px;height:26px;background:#eaf1fb;border-right:1px solid #7f98ba;border-bottom:1px solid #7f98ba;box-shadow:inset 1px 1px 0 #f7faff"></div>
<div class="a" style="left:38px;top:335px;width:1870px;height:1px;background:#c5d8f0"></div>
<div class="a" style="left:100px;top:310px;width:1px;height:26px;background:#c4d5ee"></div>
<div class="t" style="left:64.00px;top:315.14px;font-size:14.00px;">2</div>
<div class="a" style="left:236px;top:310px;width:1px;height:26px;background:#c4d5ee"></div>
<div class="t" style="left:105.00px;top:315.14px;font-size:14.00px;">PTT00002-140723</div>
<div class="a" style="left:367px;top:310px;width:1px;height:26px;background:#c4d5ee"></div>
<div class="t" style="left:241.00px;top:315.14px;font-size:14.00px;letter-spacing:0.35px">14/07/2023</div>
<div class="a" style="left:569px;top:310px;width:1px;height:26px;background:#c4d5ee"></div>
<div class="t" style="left:372.00px;top:315.48px;font-size:13.60px;">Nguyễn Hoàng Thiện</div>
<div class="a" style="left:761px;top:310px;width:1px;height:26px;background:#c4d5ee"></div>
<div class="a" style="left:915px;top:310px;width:1px;height:26px;background:#c4d5ee"></div>
<div class="a" style="left:1094px;top:310px;width:1px;height:26px;background:#c4d5ee"></div>
<div class="a" style="left:1244px;top:310px;width:1px;height:26px;background:#c4d5ee"></div>
<div class="a" style="left:1409px;top:310px;width:1px;height:26px;background:#c4d5ee"></div>
<div class="a" style="left:1611px;top:310px;width:1px;height:26px;background:#c4d5ee"></div>
<div class="a" style="left:1791px;top:310px;width:1px;height:26px;background:#c4d5ee"></div>
<div class="t" style="left:1616.00px;top:315.14px;font-size:14.00px;letter-spacing:0.35px">14/07/2023 11:13</div>
<div class="t" style="left:1796.00px;top:315.48px;font-size:13.60px;">Administrator</div>
<div class="a" style="left:8px;top:336px;width:1900px;height:26px;background:#fff"></div>
<div class="a" style="left:8px;top:336px;width:30px;height:26px;background:#eaf1fb;border-right:1px solid #7f98ba;border-bottom:1px solid #7f98ba;box-shadow:inset 1px 1px 0 #f7faff"></div>
<div class="a" style="left:38px;top:361px;width:1870px;height:1px;background:#c5d8f0"></div>
<div class="a" style="left:100px;top:336px;width:1px;height:26px;background:#c4d5ee"></div>
<div class="t" style="left:64.00px;top:341.14px;font-size:14.00px;">3</div>
<div class="a" style="left:236px;top:336px;width:1px;height:26px;background:#c4d5ee"></div>
<div class="t" style="left:105.00px;top:341.14px;font-size:14.00px;">PTT00003-131123</div>
<div class="a" style="left:367px;top:336px;width:1px;height:26px;background:#c4d5ee"></div>
<div class="t" style="left:241.00px;top:341.14px;font-size:14.00px;letter-spacing:0.35px">13/11/2023</div>
<div class="a" style="left:569px;top:336px;width:1px;height:26px;background:#c4d5ee"></div>
<div class="t" style="left:372.00px;top:341.48px;font-size:13.60px;">Nguyễn Hoàng Thiện</div>
<div class="a" style="left:761px;top:336px;width:1px;height:26px;background:#c4d5ee"></div>
<div class="a" style="left:915px;top:336px;width:1px;height:26px;background:#c4d5ee"></div>
<div class="a" style="left:1094px;top:336px;width:1px;height:26px;background:#c4d5ee"></div>
<div class="a" style="left:1244px;top:336px;width:1px;height:26px;background:#c4d5ee"></div>
<div class="a" style="left:1409px;top:336px;width:1px;height:26px;background:#c4d5ee"></div>
<div class="a" style="left:1611px;top:336px;width:1px;height:26px;background:#c4d5ee"></div>
<div class="a" style="left:1791px;top:336px;width:1px;height:26px;background:#c4d5ee"></div>
<div class="t" style="left:1616.00px;top:341.14px;font-size:14.00px;letter-spacing:0.35px">13/11/2023 14:42</div>
<div class="t" style="left:1796.00px;top:341.48px;font-size:13.60px;">Administrator</div>
<div class="a" style="left:8px;top:362px;width:1900px;height:26px;background:#fff"></div>
<div class="a" style="left:8px;top:362px;width:30px;height:26px;background:#eaf1fb;border-right:1px solid #7f98ba;border-bottom:1px solid #7f98ba;box-shadow:inset 1px 1px 0 #f7faff"></div>
<div class="a" style="left:38px;top:387px;width:1870px;height:1px;background:#c5d8f0"></div>
<div class="a" style="left:100px;top:362px;width:1px;height:26px;background:#c4d5ee"></div>
<div class="t" style="left:64.00px;top:367.14px;font-size:14.00px;">4</div>
<div class="a" style="left:236px;top:362px;width:1px;height:26px;background:#c4d5ee"></div>
<div class="t" style="left:105.00px;top:367.14px;font-size:14.00px;">PTT00004-131123</div>
<div class="a" style="left:367px;top:362px;width:1px;height:26px;background:#c4d5ee"></div>
<div class="t" style="left:241.00px;top:367.14px;font-size:14.00px;letter-spacing:0.35px">13/11/2023</div>
<div class="a" style="left:569px;top:362px;width:1px;height:26px;background:#c4d5ee"></div>
<div class="t" style="left:372.00px;top:367.14px;font-size:14.00px;">Đinh Thiện Toàn</div>
<div class="a" style="left:761px;top:362px;width:1px;height:26px;background:#c4d5ee"></div>
<div class="a" style="left:915px;top:362px;width:1px;height:26px;background:#c4d5ee"></div>
<div class="a" style="left:1094px;top:362px;width:1px;height:26px;background:#c4d5ee"></div>
<div class="a" style="left:1244px;top:362px;width:1px;height:26px;background:#c4d5ee"></div>
<div class="a" style="left:1409px;top:362px;width:1px;height:26px;background:#c4d5ee"></div>
<div class="a" style="left:1611px;top:362px;width:1px;height:26px;background:#c4d5ee"></div>
<div class="a" style="left:1791px;top:362px;width:1px;height:26px;background:#c4d5ee"></div>
<div class="t" style="left:1616.00px;top:367.14px;font-size:14.00px;letter-spacing:0.35px">13/11/2023 14:42</div>
<div class="t" style="left:1796.00px;top:367.48px;font-size:13.60px;">Administrator</div>
<div class="a" style="left:8px;top:975px;width:1900px;height:28px;background:linear-gradient(#eef4fb,#dfe9f5);border-top:1px solid #8ea3bf"></div>
<div class="t" style="left:831.00px;top:983.14px;font-size:14.00px;font-weight:bold;color:#f00;letter-spacing:0.95px;-webkit-text-stroke:0.3px currentColor">22,400,000</div>
<div class="a" style="left:914px;top:980px;width:1px;height:19px;background:#7f98ba"></div>
<div class="a" style="left:3px;top:1010px;width:1912px;height:5px;background:linear-gradient(#aebdd2,#d0dcec)"></div>
<div class="a" style="left:0;top:1015px;width:1920px;height:24px;background:linear-gradient(#dfe8f4,#bccbe0);border-top:1px solid #8aa1c0;box-shadow:inset 0 1px 0 #f4f8fc"></div>
<div class="sb" style="left:6.00px;top:1022.55px;font-size:11.75px;font-weight:bold">Chào mừng: administrator đến với phần mềm mekongsoft</div>
<div class="sb" style="left:343.00px;top:1022.76px;font-size:11.50px;">|</div>
<div class="sb" style="left:355.50px;top:1023.10px;font-size:11.10px;">Version: 4.8.0</div>
<div class="sb" style="left:435.00px;top:1022.76px;font-size:11.50px;">|</div>
<div class="sb" style="left:447.50px;top:1023.10px;font-size:11.10px;">Ngày: 13/11/2023 2:50:34 CH</div>
<div class="a" style="left:1617px;top:1018px;width:1px;height:20px;background:#9cb0c9"></div>
<div class="sb" style="left:1626.50px;top:1022.51px;font-size:11.80px;font-weight:bold">@2023 MekongSoft. Thông tin hỗ trợ: 0901 000 508</div>
<div class="a" style="left:557px;top:296px;width:806px;height:447px;background:#c0d1e8;border:1px solid #8392a8"></div>
<div class="a" style="left:558px;top:297px;width:804px;height:28px;background:linear-gradient(#c6d6ec,#bccde6)"></div>
<svg class="a" style="left:567px;top:305px" width="16" height="16" viewBox="0 0 16 16"><rect x="0" y="0" width="16" height="16" rx="4.5" fill="#e51e25"/><path d="M3 3L7.3 7.8" stroke="#fff" stroke-width="1.4" fill="none" stroke-linecap="round"/><path d="M6.6 7.2L8.9 12.5L13 6.2" stroke="#fff" stroke-width="2" fill="none" stroke-linecap="round" stroke-linejoin="round"/></svg>
<div class="t" style="left:586.50px;top:308.82px;font-size:10.60px;color:#1e395b">Phiếu thu</div>
<svg class="a" style="left:1335px;top:308px" width="12" height="11" viewBox="0 0 12 11"><path d="M2 2L10 9M10 2L2 9" stroke="#2f3a48" stroke-width="3.6" stroke-linecap="round"/><path d="M2 2L10 9M10 2L2 9" stroke="#fff" stroke-width="1.9" stroke-linecap="round"/></svg>
<div class="a" style="left:564px;top:325px;width:792px;height:411px;background:#d0dcec;border:1px solid #7189aa"></div>
<div class="a" style="left:570px;top:329px;width:782px;height:356px;border:2px solid #f23a3a;box-shadow:inset 0 4px 4px -1px rgba(70,85,105,0.38), inset 0 0 4px rgba(70,85,105,0.25), 2px 3px 4px rgba(70,85,105,0.3)"></div>
<div class="t" style="left:577.40px;top:345.57px;font-size:13.50px;color:#1e3657">Ngày lập</div>
<div class="inp" style="left:664px;top:339px;width:287px;height:24px"><div class="dd"></div></div>
<div class="a" style="left:667px;top:342px;width:76px;height:17px;background:#0a78d6"></div>
<div class="a" style="left:667px;top:342px;width:1px;height:17px;background:#e08a2a"></div>
<div class="t" style="left:668.80px;top:344.34px;font-size:14.00px;color:#fff;letter-spacing:0.35px">12/07/2023</div>
<div class="t" style="left:955.20px;top:345.82px;font-size:13.20px;color:#1e3657">Số phiếu</div>
<div class="dis" style="left:1035px;top:339px;width:308px;height:24px"></div>
<div class="t" style="left:1039.00px;top:344.34px;font-size:14.00px;">PTT00001-120723</div>
<div class="t" style="left:577.40px;top:373.56px;font-size:14.10px;color:#1e3657">Nhân viên (*)</div>
<div class="inp" style="left:664px;top:368px;width:287px;height:24px"><div class="dd"></div></div>
<div class="t" style="left:668.80px;top:372.94px;font-size:14.00px;letter-spacing:0.05px">14308, Nhân viên 1, 0939 55 11 90</div>
<div class="t" style="left:955.20px;top:374.66px;font-size:12.80px;color:#1e3657">Người lập</div>
<div class="dis" style="left:1042px;top:368px;width:301px;height:24px"></div>
<div class="t" style="left:1045.70px;top:373.28px;font-size:13.60px;">Administrator</div>
<div class="t" style="left:577.40px;top:402.59px;font-size:13.00px;color:#1e3657">Tên KH/NCC</div>
<div class="inp" style="left:664px;top:396px;width:678px;height:24px"><div class="dd" style="right:40px"></div><div class="a" style="right:20px;top:0;bottom:0;width:20px;border-left:1px solid #b0c1d7;background:linear-gradient(#f5f8fc,#dfe8f3)"></div><div class="a" style="right:0;top:0;bottom:0;width:20px;border-left:1px solid #b0c1d7;background:linear-gradient(#f5f8fc,#dfe8f3)"></div><svg class="a" style="right:23px;top:3px" width="15" height="15" viewBox="0 0 15 15"><circle cx="7.5" cy="7.5" r="6.8" fill="#47b52c" stroke="#2f8a1a" stroke-width="0.8"/><path d="M7.5 3.5V11.5M3.5 7.5H11.5" stroke="#fff" stroke-width="2.4"/></svg><svg class="a" style="right:3px;top:3px" width="15" height="16" viewBox="0 0 15 16"><path d="M2.5 7A5 5 0 0 1 11.5 4L13 2.5V7.5H8L10 5.5A3 3 0 0 0 4.8 7.2Z" fill="#3aa82c" stroke="#247a18" stroke-width="0.6"/><path d="M12.5 9A5 5 0 0 1 3.5 12L2 13.5V8.5H7L5 10.5A3 3 0 0 0 10.2 8.8Z" fill="#3aa82c" stroke="#247a18" stroke-width="0.6"/></svg></div>
<div class="t" style="left:668.80px;top:401.58px;font-size:13.60px;">14325, Đinh Thiện Toàn,</div>
<div class="t" style="left:578.60px;top:430.35px;font-size:13.40px;color:#1e3657">T.Nợ cũ</div>
<div class="dis" style="left:665px;top:424px;width:676px;height:24px"></div>
<div class="t" style="left:669.50px;top:429.34px;font-size:14.00px;color:#1515e6;font-weight:bold;letter-spacing:1px;-webkit-text-stroke:0.3px currentColor">9,200,000</div>
<div class="t" style="left:578.00px;top:453.57px;font-size:10.90px;font-style:italic;color:#1a1ad8">*** Nợ cũ không bao gồm tiền khách hàng đã đặt cọc trên phiếu đặt hàng</div>
<svg class="a" style="left:1018px;top:436px" width="9" height="16"><path d="M1 1H3.5C4 1 4.5 1.5 4.5 2V14C4.5 14.5 4 15 3.5 15H1M8 1H5.5C5 1 4.5 1.5 4.5 2M4.5 14C4.5 14.5 5 15 5.5 15H8" stroke="#000" stroke-width="1" fill="none"/></svg>
<div class="t" style="left:577.10px;top:475.57px;font-size:13.50px;color:#1e3657">Người nộp</div>
<div class="inp" style="left:664px;top:469px;width:679px;height:24px"></div>
<div class="t" style="left:577.10px;top:502.20px;font-size:14.40px;color:#1e3657">Nội dung (*)</div>
<div class="inp" style="left:664px;top:497px;width:679px;height:24px"><div class="dd"></div></div>
<div class="t" style="left:668.60px;top:502.40px;font-size:13.70px;">Thu công nợ khách hàng</div>
<div class="t" style="left:577.10px;top:531.03px;font-size:13.30px;color:#1e3657">Số tiền</div>
<div class="inp" style="left:664px;top:525px;width:677px;height:24px"></div>
<div class="t" style="left:668.60px;top:530.14px;font-size:14.00px;color:#1515e6;font-weight:bold;letter-spacing:1px;-webkit-text-stroke:0.3px currentColor">9,200,000</div>
<div class="t" style="left:577.10px;top:558.26px;font-size:14.10px;color:#1e3657">Quỹ</div>
<div class="inp" style="left:664px;top:553px;width:679px;height:24px"><div class="dd"></div></div>
<div class="t" style="left:668.60px;top:558.14px;font-size:14.00px;">Tiền mặt</div>
<div class="t" style="left:577.10px;top:613.52px;font-size:13.20px;color:#1e3657">Ghi chú</div>
<div class="inp" style="left:664px;top:581px;width:679px;height:78px"><div class="a" style="right:0;top:0;bottom:0;width:17px;background:#dfe7f2;border-left:1px solid #c5d2e3"></div><svg class="a" style="right:4px;top:5px" width="9" height="5"><path d="M0 5L4.5 0L9 5Z" fill="#aab8ca"/></svg><svg class="a" style="right:4px;bottom:5px" width="9" height="5"><path d="M0 0L4.5 5L9 0Z" fill="#aab8ca"/></svg></div>
<div class="t" style="left:577.10px;top:669.07px;font-size:13.50px;color:#1e3657">Còn nợ</div>
<div class="dis" style="left:664px;top:663px;width:524px;height:24px"></div>
<div class="t" style="left:668.60px;top:667.64px;font-size:14.00px;color:#1515e6;font-weight:bold;letter-spacing:1px;-webkit-text-stroke:0.3px currentColor">0</div>
<div class="a" style="left:1192px;top:668px;width:13px;height:13px;background:#fff;border:1px solid #3a3a3a"></div>
<div class="t" style="left:1211.20px;top:668.11px;font-size:13.80px;color:#1e3657">Không tính công nợ</div>
<div class="a" style="left:570px;top:683px;width:782px;height:2px;background:#f23a3a"></div>
<div class="a" style="left:997px;top:691px;width:75px;height:32px;border:1px solid #a7b8cf;border-radius:3px;background:linear-gradient(#e9eff8,#d6e1ef)"><svg class="a" style="left:4px;top:7px" width="17" height="17" viewBox="0 0 17 17"><path d="M0.5 0.5H13.5L16 3V16H0.5Z" fill="#58a6e6" stroke="#2a78c0" stroke-width="1"/><rect x="3.5" y="1" width="9" height="6" fill="#e8e8e8"/><rect x="10" y="2" width="1.6" height="3.5" fill="#3a9ae0"/><rect x="2" y="8.5" width="12" height="7" fill="#fbf8f4"/><path d="M4 10.5H12.5M4 12.5H12.5M4 14.3H12.5" stroke="#444" stroke-width="0.9"/></svg></div>
<div class="t" style="left:1029.20px;top:701.17px;font-size:13.50px;font-weight:bold;color:#1515e6;letter-spacing:0px;-webkit-text-stroke:0.3px currentColor">LƯU</div>
<div class="a" style="left:1076px;top:691px;width:106px;height:32px;border:1px solid #a7b8cf;border-radius:3px;background:linear-gradient(#e9eff8,#d6e1ef)"><svg class="a" style="left:3px;top:6px" width="18" height="18" viewBox="0 0 18 18"><circle cx="9" cy="9" r="8" fill="#3bb03a" stroke="#24861f"/><path d="M9 4.5V13.5M4.5 9H13.5" stroke="#fff" stroke-width="3"/></svg></div>
<div class="t" style="left:1100.90px;top:700.32px;font-size:14.50px;font-weight:bold;color:#1515e6;letter-spacing:0.2px;-webkit-text-stroke:0.3px currentColor">THÊM MỚI</div>
<div class="a" style="left:1186px;top:691px;width:72px;height:32px;border:1px solid #a7b8cf;border-radius:3px;background:linear-gradient(#e9eff8,#d6e1ef)"><svg class="a" style="left:3px;top:6px" width="23" height="19" viewBox="0 0 23 19"><path d="M11 1H16.5V8H11Z" fill="#4a82c0" stroke="#2f5f98" stroke-width="0.6"/><path d="M3 8C3 6 5 5 8 5H18L20.5 8V15L17 17H5L3 15Z" fill="#3c6fae" stroke="#24497a" stroke-width="0.7"/><path d="M17 7.5H20.5L21.5 10V15.5L17.5 17.5Z" fill="#b39a7c" stroke="#6f5a44" stroke-width="0.6"/><path d="M0.5 15.5L4.5 12H14.5L12 17.5L5 18.5Z" fill="#cde8f0" stroke="#8a7660" stroke-width="0.7"/><path d="M5.5 9H15M5.5 11H16" stroke="#6a9ad6" stroke-width="0.8"/></svg></div>
<div class="t" style="left:1225.10px;top:700.32px;font-size:14.50px;font-weight:bold;color:#1515e6;letter-spacing:2px;-webkit-text-stroke:0.3px currentColor">IN</div>
<div class="a" style="left:1263px;top:691px;width:80px;height:32px;border:1px solid #a7b8cf;border-radius:3px;background:linear-gradient(#e9eff8,#d6e1ef)"><svg class="a" style="left:4px;top:8px" width="20" height="16" viewBox="0 0 20 16"><path d="M1 2H7L8 4H14V13H1Z" fill="#f2d86a" stroke="#c9a52a" stroke-width="0.8"/><path d="M8 8H13V5.5L18 9.5L13 13.5V11H8Z" fill="#3ba33a" stroke="#237a20" stroke-width="0.6"/></svg></div>
<div class="t" style="left:1287.10px;top:700.49px;font-size:14.30px;font-weight:bold;color:#e8101a;letter-spacing:0px;-webkit-text-stroke:0.3px currentColor">THOÁT</div>
<div class="a" style="left:1465px;top:353px;width:266px;height:79px;background:#fff;border:2px solid #000;border-radius:4px;box-shadow:2px 3px 3px rgba(0,0,0,0.35)"></div>
<div class="t" style="left:1508.50px;top:385.30px;font-size:15.00px;color:#000">1.Nhập thông tin phiếu thu</div>
<svg class="a" style="left:1348px;top:426px;overflow:visible;filter:drop-shadow(2px 3px 2px rgba(0,0,0,0.3))" width="122" height="44" viewBox="0 0 122 44"><path d="M117.5 5.3L6 38" stroke="#000" stroke-width="2.2"/><path d="M3.3 38.5L9.5 34.3L10.8 39.6Z" fill="#000" stroke="#000" stroke-width="0.8" stroke-linejoin="round"/></svg>
</body></html>
